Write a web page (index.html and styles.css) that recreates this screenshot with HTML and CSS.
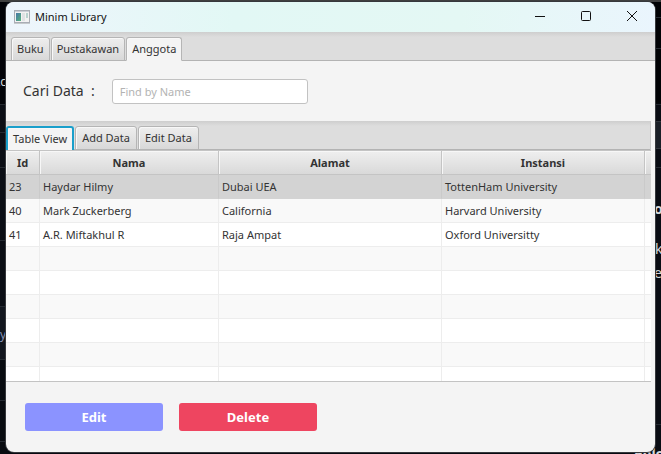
FILE: index.html
```html
<!DOCTYPE html>
<html lang="id">
<head>
<meta charset="utf-8">
<title>Minim Library</title>
<link rel="stylesheet" href="styles.css">
</head>
<body>
<div class="desktop" aria-hidden="true">
  <div class="strip strip-left">
    <i class="rule l1"></i><i class="rule l2"></i><i class="rule l3"></i><i class="rule l4"></i><i class="rule l5"></i><i class="rule l6"></i><i class="rule l7"></i><i class="rule l8"></i>
    <span class="frag f1">Ac</span><span class="frag f2">y</span>
  </div>
  <div class="strip strip-right">
    <i class="rule r1"></i><i class="rule r2"></i><i class="rule r3"></i><i class="block"></i><i class="rule r4"></i><i class="rule r5"></i>
    <span class="frag f3">o</span><span class="frag f4">k</span><span class="frag f5">e</span><span class="frag f6">Polo</span>
  </div>
</div>
<main class="window">
  <header class="titlebar">
    <svg class="app-icon" width="16" height="14" viewBox="0 0 16 14">
      <defs><linearGradient id="pane" x1="0" y1="0" x2="1" y2="1"><stop offset="0" stop-color="#4877a8"/><stop offset="1" stop-color="#55b37c"/></linearGradient></defs>
      <rect x=".5" y=".5" width="15" height="12" fill="#f2f2f2" stroke="#a9adb5"/>
      <path d="M1 1.5h14" stroke="#c9ced6"/>
      <rect x="2" y="3" width="5" height="8" fill="url(#pane)"/>
      <rect x="8" y="3" width="3" height="8" fill="#e0e2e4"/>
      <rect x="12" y="3" width="2" height="5" fill="#b9d2cf"/>
      <path d="M0 13.5h16" stroke="#c5c9cc"/>
    </svg>
    <h1>Minim Library</h1>
    <div class="controls">
      <button type="button" aria-label="Minimize"><svg width="12" height="12" viewBox="0 0 12 12"><path d="M1 6.5h10"/></svg></button>
      <button type="button" aria-label="Maximize"><svg width="12" height="12" viewBox="0 0 12 12"><rect x="1.5" y="1.5" width="9" height="9" rx="1"/></svg></button>
      <button type="button" aria-label="Close"><svg width="12" height="12" viewBox="0 0 12 12"><path d="M1 1l10 10M11 1L1 11"/></svg></button>
    </div>
  </header>
  <nav class="tabs main-tabs">
    <button type="button" class="tab">Buku</button>
    <button type="button" class="tab">Pustakawan</button>
    <button type="button" class="tab active">Anggota</button>
  </nav>
  <form class="search">
    <label for="find">Cari Data&nbsp; :</label>
    <input id="find" type="text" placeholder="Find by Name">
  </form>
  <section class="content">
    <nav class="tabs sub-tabs">
      <button type="button" class="tab active focused">Table View</button>
      <button type="button" class="tab">Add Data</button>
      <button type="button" class="tab">Edit Data</button>
    </nav>
    <div class="table-wrap">
      <table>
        <colgroup><col class="c-id"><col class="c-nama"><col class="c-alamat"><col class="c-instansi"><col></colgroup>
        <thead><tr><th>Id</th><th>Nama</th><th>Alamat</th><th>Instansi</th><th></th></tr></thead>
        <tbody>
          <tr class="selected"><td>23</td><td>Haydar Hilmy</td><td>Dubai UEA</td><td>TottenHam University</td><td></td></tr>
          <tr><td>40</td><td>Mark Zuckerberg</td><td>California</td><td>Harvard University</td><td></td></tr>
          <tr><td>41</td><td>A.R. Miftakhul R</td><td>Raja Ampat</td><td>Oxford Universitty</td><td></td></tr>
          <tr><td></td><td></td><td></td><td></td><td></td></tr>
          <tr><td></td><td></td><td></td><td></td><td></td></tr>
          <tr><td></td><td></td><td></td><td></td><td></td></tr>
          <tr><td></td><td></td><td></td><td></td><td></td></tr>
          <tr><td></td><td></td><td></td><td></td><td></td></tr>
          <tr><td></td><td></td><td></td><td></td><td></td></tr>
        </tbody>
      </table>
    </div>
  </section>
  <footer class="actions">
    <button type="button" class="action edit">Edit</button>
    <button type="button" class="action delete">Delete</button>
  </footer>
</main>
</body>
</html>
```
FILE: styles.css
```css
* { box-sizing: border-box; }
body {
  margin: 0;
  height: 100vh;
  padding: 2px 6px 2px 6px;
  display: flex;
  overflow: hidden;
  background: #070a10;
  color: #333;
  font: 11px/16px "Noto Sans", "Open Sans", sans-serif;
}
button, input { font: inherit; color: inherit; margin: 0; }

/* Desktop behind the window */
.desktop { position: absolute; inset: 0; overflow: hidden; border-top: 2px solid #3f3f3f; }
.strip { position: absolute; top: 0; bottom: 0; overflow: hidden; }
.strip-left { left: 0; width: 6px; background: linear-gradient(#020308 102px, #0b0e15 103px 304px, #12161e 305px 357px, #080b10 358px); }
.strip-right { right: 0; width: 28px; background: linear-gradient(#010205 100px, #090c13 104px); }
.rule { position: absolute; left: 0; right: 0; height: 1px; background: #252a31; }
.l1 { top: 102px; } .l2 { top: 165px; } .l3 { top: 238px; } .l4 { top: 304px; }
.l5 { top: 357px; } .l6 { top: 398px; } .l7 { top: 439px; } .l8 { top: 130px; }
.r1 { top: 15px; } .r2 { top: 46px; } .r3 { top: 102px; } .r4 { top: 165px; } .r5 { top: 422px; }
.block { position: absolute; left: 0; right: 0; top: 119px; height: 28px; background: #1a1f27; border: solid #30353c; border-width: 1px 0; }
.frag { position: absolute; color: #d5d8dc; white-space: nowrap; font-size: 14px; }
.f1 { right: 0; top: 72px; font-size: 12px; }
.f2 { right: 0; top: 325px; font-size: 12px; color: #8793b5; }
.f3 { left: 21px; top: 199px; font-weight: bold; }
.f4 { left: 22px; top: 239px; }
.f5 { left: 21px; top: 263px; }
.f6 { left: 1px; top: 444px; font-weight: bold; }

.window {
  position: relative;
  flex: 1;
  min-width: 0;
  display: flex;
  flex-direction: column;
  background: #f4f4f4;
  border-radius: 8px;
  overflow: hidden;
  box-shadow: 0 0 0 1px #36383c;
}
.titlebar {
  display: flex;
  align-items: center;
  height: 30px;
  flex: none;
  padding-left: 8px;
  background: linear-gradient(90deg, #eef5fc, #e2f8f5 35%, #e4f8f4 70%, #eaf5fd);
}
.titlebar h1 { margin: 0 0 0 5px; font-size: 11px; font-weight: normal; color: #111; }
.controls { display: flex; margin-left: auto; }
.controls button { width: 46px; height: 30px; padding: 0 0 2px; border: 0; background: none; display: grid; place-items: center; }
.controls svg { fill: none; stroke: #111; }

.tabs {
  display: flex;
  flex: none;
  align-items: flex-end;
  gap: 1px;
  height: 29px;
  padding: 5px 5px 0;
  background: linear-gradient(#cecece, #ddd 5px);
  box-shadow: inset 0 -1px #b3b3b3;
}
.tab {
  height: 24px;
  padding: 0 5px;
  border: 1px solid #b5b5b5;
  border-radius: 3px 3px 0 0;
  background: linear-gradient(#eee, #d8d8d8);
  box-shadow: inset 1px 1px #f8f8f8;
  white-space: nowrap;
}
.tab.active { background: #f4f4f4; border-bottom-color: #f4f4f4; }
.sub-tabs { padding-left: 0; border-right: 1px solid #cacaca; }
.sub-tabs .tab { padding: 0 6px; }
.sub-tabs .focused { border: 2px solid #1a9fcb; border-bottom: 0; padding: 0 5px; }

.search { display: flex; align-items: center; gap: 17px; flex: none; height: 60px; padding: 0 17px; }
.search label { font-size: 14px; }
.search input {
  width: 196px;
  height: 25px;
  padding: 0 7px;
  border: 1px solid #c2c2c2;
  border-radius: 3px;
  background: #fff;
  outline: 0;
}
.search input::placeholder { color: #b3b3b3; opacity: 1; }

.content { flex: 1; min-height: 0; display: flex; flex-direction: column; margin-right: 4px; }
.table-wrap { flex: 1; min-height: 0; overflow: hidden; border-bottom: 1px solid #c3c3c3; }
table { width: 100%; table-layout: fixed; border-collapse: separate; border-spacing: 0; }
.c-id { width: 34px; } .c-nama { width: 179px; } .c-alamat { width: 223px; } .c-instansi { width: 203px; }
th {
  height: 25px;
  padding: 0;
  background: linear-gradient(#efefef, #d9d9d9);
  border: solid #c4c4c4;
  border-width: 1px 1px 1px 0;
  box-shadow: inset 1px 1px #f7f7f7;
}
td { height: 24px; padding: 0 3px; border: solid #ededed; border-width: 0 1px 1px 0; white-space: nowrap; background: #fff; }
tr:nth-child(even) td { background: #f9f9f9; }
tr.selected td { background: #d3d3d3; border-bottom-color: #d3d3d3; border-right-color: #cacaca; }
th:last-child, td:last-child { border-right: 0; }

.actions { display: flex; flex: none; gap: 16px; padding: 21px 19px; }
.action { width: 138px; height: 28px; padding: 0; border: 0; border-radius: 3px; color: #fff; font-size: 13px; font-weight: bold; }
.edit { background: #8b93ff; }
.delete { background: #ee4560; }
```
